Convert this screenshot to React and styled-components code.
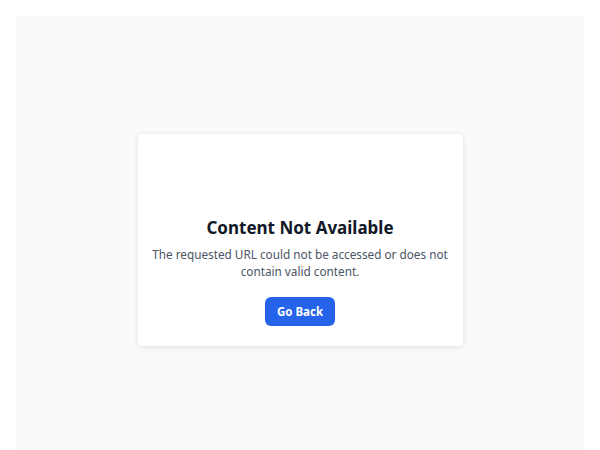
import styled, { createGlobalStyle } from 'styled-components';

const GlobalStyle = createGlobalStyle`
  * { box-sizing: border-box; }
  body {
    margin: 0;
    background: #ffffff;
    font-family: "Noto Sans", "Open Sans", sans-serif;
  }
`;

const Page = styled.div`
  padding: 16px;
`;

const Panel = styled.main`
  min-height: 448px;
  background: #f9fafb;
  display: flex;
  align-items: center;
  justify-content: center;
`;

const Card = styled.section`
  width: 325px;
  padding: 82px 12px 20px;
  background: #ffffff;
  border-radius: 4px;
  box-shadow: 0 1px 6px rgba(0, 0, 0, 0.1), 0 0 2px rgba(0, 0, 0, 0.05);
  display: flex;
  flex-direction: column;
  align-items: center;
  text-align: center;
`;

const Title = styled.h1`
  margin: 0 0 6px;
  font-size: 17px;
  font-weight: 700;
  color: #111827;
  line-height: 24px;
`;

const Message = styled.p`
  margin: 0 0 17px;
  font-size: 11.75px;
  line-height: 17px;
  color: #4b5563;
`;

const Button = styled.button`
  height: 29px;
  padding: 0 12px;
  border: none;
  border-radius: 6px;
  background: #2563eb;
  color: #ffffff;
  font-family: inherit;
  font-size: 11.5px;
  font-weight: 700;
  cursor: pointer;
`;

export default function App() {
  return (
    <>
      <GlobalStyle />
      <Page>
        <Panel>
          <Card>
            <Title>Content Not Available</Title>
            <Message>
              The requested URL could not be accessed or does not contain valid content.
            </Message>
            <Button type="button" onClick={() => window.history.back()}>
              Go Back
            </Button>
          </Card>
        </Panel>
      </Page>
    </>
  );
}
